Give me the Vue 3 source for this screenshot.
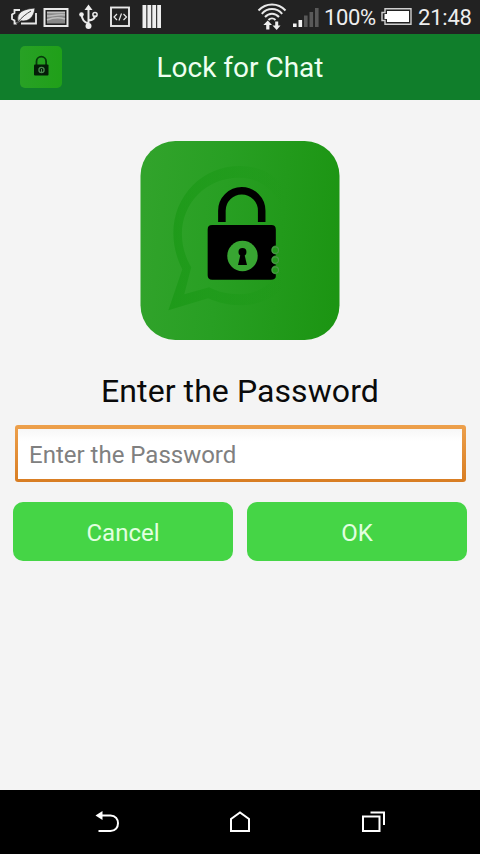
<script setup>
import { ref } from 'vue'

const password = ref('')
const cancel = () => { password.value = '' }
</script>

<template>
  <div class="phone">
    <div class="status">
      <svg class="left-icons" width="170" height="34" viewBox="0 0 170 34" fill="none" stroke="#e8e8e8">
        <path d="M20 10H14.500V13L12 14.500V19L14.500 20.500V23.500H17M21 23.500H36V13" stroke-width="1.800" />
        <path d="M18 21C16 12 24 9 35 8C34 17 29 22 21 20.800L16.500 24Z" fill="#eee" stroke="#222" stroke-width=".7" />
        <path d="M18 22C22 17 26 14 31 11" stroke="#444" stroke-width="1" />
        <rect x="44.500" y="9" width="23" height="17" stroke-width="2" />
        <rect x="47" y="11.500" width="18" height="12" fill="#888" stroke="none" />
        <path d="M47 12.500h18M47 16c6 0 10-2 18-1M47 20c5-2 12-3 18-1" stroke="#bdbdbd" stroke-width="1.500" />
        <path d="M88.500 8V25M88.500 23.500Q82 22 81.500 14M88.500 20.500Q95 20 95 15.500" stroke-width="2" />
        <path d="M84.500 10L88.500 4.500L92.500 10Z" fill="#eee" stroke="none" />
        <circle cx="81.500" cy="14.500" r="2.300" fill="#eee" stroke="none" />
        <circle cx="95" cy="14.500" r="2.100" stroke-width="1.500" />
        <circle cx="88.500" cy="26" r="3" fill="#eee" stroke="none" />
        <rect x="111" y="7.500" width="18" height="18.500" stroke-width="1.900" />
        <path d="M117 14l-3 3 3 3M123.500 14l3 3-3 3M121.500 13.500l-2.500 7" stroke-width="1.200" />
        <path d="M142.500 5h3.800v23h-3.800zM147.400 5h3.800v23h-3.800zM152.300 5h3.800v23h-3.800zM157.200 5h3.800v23h-3.800z" fill="#eee" stroke="none" />
      </svg>
      <svg class="signal" width="66" height="34" viewBox="255 0 66 34" fill="none" stroke="#e8e8e8">
        <path d="M258.500 10.500C266 2.500 278 2.500 285.500 10.500M261.800 13.800C267.500 7.500 276.500 7.500 282.200 13.800M265 17C269 12.500 275 12.500 279 17M268.500 20C270.500 18 273.500 18 275.500 20" stroke-width="2" />
        <path d="M263.300 25L267.800 20.500L272 25H269.400V29.500H266.200V25ZM272.500 25.500H275.200V21.500H278.200V25.500H280.500L276.700 30Z" fill="#eee" stroke="none" />
        <path d="M293 23.500h3.600V27H293zM298.500 20h3.600v7h-3.600z" fill="#f2f2f2" stroke="none" />
        <path d="M304 15.500h3.600V27H304zM309.500 12h3.600v15h-3.600zM315 8h3.600v19H315z" fill="#595959" stroke="none" />
      </svg>
      <span class="percent">100%</span>
      <svg class="battery" width="34" height="34" viewBox="380 0 34 34">
        <path d="M385 8.800H411V24.200H385V20.500H382V12.500H385Z" fill="none" stroke="#cfcfcf" stroke-width="1.400" />
        <path d="M387 11H409V22H387V19H384.500V14H387Z" fill="#fff" />
      </svg>
      <span class="clock">21:48</span>
    </div>

    <header class="header">
      <svg class="header-logo" viewBox="0 0 42 42">
        <defs>
          <linearGradient id="small-bg"><stop offset="0" stop-color="#28a125" /><stop offset="1" stop-color="#20a019" /></linearGradient>
        </defs>
        <rect width="42" height="42" rx="5" fill="url(#small-bg)" />
        <path d="M16.500 19V15.500a4.800 4.800 0 0 1 9.600 0V19" fill="none" stroke="#073b0b" stroke-width="1.800" />
        <rect x="14" y="18.500" width="14.500" height="11" rx="1" fill="#051d08" />
        <circle cx="21.500" cy="24" r="2.600" fill="none" stroke="#4b8a51" stroke-width="1.300" />
        <path d="M21.500 23v3" stroke="#4b8a51" />
      </svg>
      <h1>Lock for Chat</h1>
    </header>

    <main class="content">
      <svg class="logo" viewBox="0 0 200 200">
        <defs>
          <linearGradient id="logo-bg" x1="0" y1=".45" x2="1" y2=".55">
            <stop offset="0" stop-color="#31a32b" />
            <stop offset=".4" stop-color="#289f23" />
            <stop offset="1" stop-color="#1c9513" />
          </linearGradient>
          <linearGradient id="bubble" x1="30" y1="0" x2="145" y2="0" gradientUnits="userSpaceOnUse">
            <stop offset="0" stop-color="#13950f" stop-opacity=".55" />
            <stop offset=".5" stop-color="#13950f" stop-opacity=".32" />
            <stop offset="1" stop-color="#13950f" stop-opacity="0" />
          </linearGradient>
        </defs>
        <rect width="200" height="200" rx="35" fill="url(#logo-bg)" />
        <path fill="url(#bubble)" fill-rule="evenodd" d="M28 170L42 129C16 77 50 25 100 25C180 25 186 165 100 165C88 165 77 162 68 158ZM44 154L69 147C79 152 88 154 99 154C167 153 163 37 99 37C54 37 26 84 51 127Z" />
        <path d="M81.800 81.500V70a20 20 0 0 1 40 0V81.500" fill="none" stroke="#000" stroke-width="7.600" />
        <path d="M72 84.500H131.500Q136 84.500 136 89V105a4 4 0 0 0 0 9v1a4 4 0 0 0 0 9v1a4 4 0 0 0 0 9v2Q136 139.500 131 139.500H72Q67.500 139.500 67.500 135V89Q67.500 84.500 72 84.500Z" fill="#000" />
        <circle cx="102.500" cy="115.500" r="15.300" fill="#38a532" />
        <circle cx="102.500" cy="111.500" r="4" fill="#000" />
        <path d="M101 112H104L107 124.500H98Z" fill="#000" />
        <g fill="none" stroke="#4c9649" stroke-width="1.200">
          <circle cx="135.500" cy="109.700" r="3.200" /><circle cx="135.500" cy="119.700" r="3.200" /><circle cx="135.500" cy="129.700" r="3.200" />
        </g>
      </svg>

      <h2>Enter the Password</h2>
      <div class="field"><input v-model="password" type="password" placeholder="Enter the Password" /></div>
      <div class="actions">
        <button type="button" @click="cancel">Cancel</button>
        <button type="button">OK</button>
      </div>
    </main>

    <nav class="navbar">
      <svg viewBox="95 808 26 26"><path d="M101 815.500H110.500C120.500 815.500 120.500 831 110.500 831H98.500" /><path class="solid" d="M95.500 815.500L102.500 811V820Z" /></svg>
      <svg viewBox="227 808 26 26"><path d="M231 831V819L240 812.500L249 819V831Z" /></svg>
      <svg viewBox="360 808 26 26"><path d="M363 816.500H379.500V831H363ZM370.500 812.500H384V825" /></svg>
    </nav>
  </div>
</template>

<style>
body { margin: 0; background: #f4f4f4; }
</style>

<style scoped>
.phone {
  display: flex;
  flex-direction: column;
  width: 480px;
  height: 854px;
  overflow: hidden;
  background: #f4f4f4;
  font-family: Roboto, "Liberation Sans", sans-serif;
}
.status {
  display: flex;
  flex: none;
  align-items: center;
  height: 34px;
  background: #222;
  color: #eee;
  font-size: 22px;
  line-height: 34px;
  white-space: nowrap;
}
.signal { margin-left: 85px; }
.percent { width: 55px; margin-left: 3px; flex: none; letter-spacing: -.4px; }
.percent, .clock { padding-top: 2px; }
.battery { margin-left: 1px; }
.clock { margin-left: 4px; letter-spacing: -.2px; }
svg { display: block; flex: none; }
.header {
  display: grid;
  grid-template-columns: 62px 1fr 62px;
  align-items: center;
  flex: none;
  box-sizing: border-box;
  height: 66px;
  background: #107e2b;
}
.header-logo { width: 42px; height: 42px; justify-self: end; }
h1 {
  margin: 0;
  padding-top: 2px;
  color: #eefff0;
  font-size: 28px;
  font-weight: 400;
  line-height: 34px;
  text-align: center;
}
.content {
  display: flex;
  flex: 1;
  flex-direction: column;
  align-items: center;
  padding: 41px 13px 0;
}
.logo { width: 200px; height: 199px; }
h2 {
  margin: 31px 0 0;
  color: #0a0a0a;
  font-size: 32px;
  font-weight: 400;
  line-height: 40px;
  letter-spacing: .08px;
}
.field {
  width: 451px;
  height: 57px;
  margin-top: 14px;
  box-sizing: border-box;
  padding: 3.5px;
  border-radius: 3px;
  background: linear-gradient(#eda04c, #d87d22);
}
input {
  display: block;
  box-sizing: border-box;
  width: 100%;
  height: 100%;
  padding: 2px 11px 0;
  border: 0;
  outline: 0;
  background: linear-gradient(#f7f7f7, #fff 12px);
  font: 24px Roboto, "Liberation Sans", sans-serif;
}
input::placeholder { color: #808080; opacity: 1; }
.actions {
  display: grid;
  grid-template-columns: 1fr 1fr;
  gap: 14px;
  width: 100%;
  margin-top: 20px;
}
button {
  height: 59px;
  padding: 3px 0 0;
  border: 0;
  border-radius: 10px;
  background: #45d546;
  color: #e2ffe0;
  font: 24px Roboto, "Liberation Sans", sans-serif;
}
.navbar {
  display: flex;
  flex: none;
  justify-content: space-between;
  box-sizing: border-box;
  height: 64px;
  padding: 18px 94px 0 95px;
  background: #000;
}
.navbar svg { width: 26px; height: 26px; }
.navbar svg:nth-child(2) { margin-right: 2px; }
.navbar path { fill: none; stroke: #fff; stroke-width: 2; }
.navbar .solid { fill: #fff; stroke: none; }
</style>
